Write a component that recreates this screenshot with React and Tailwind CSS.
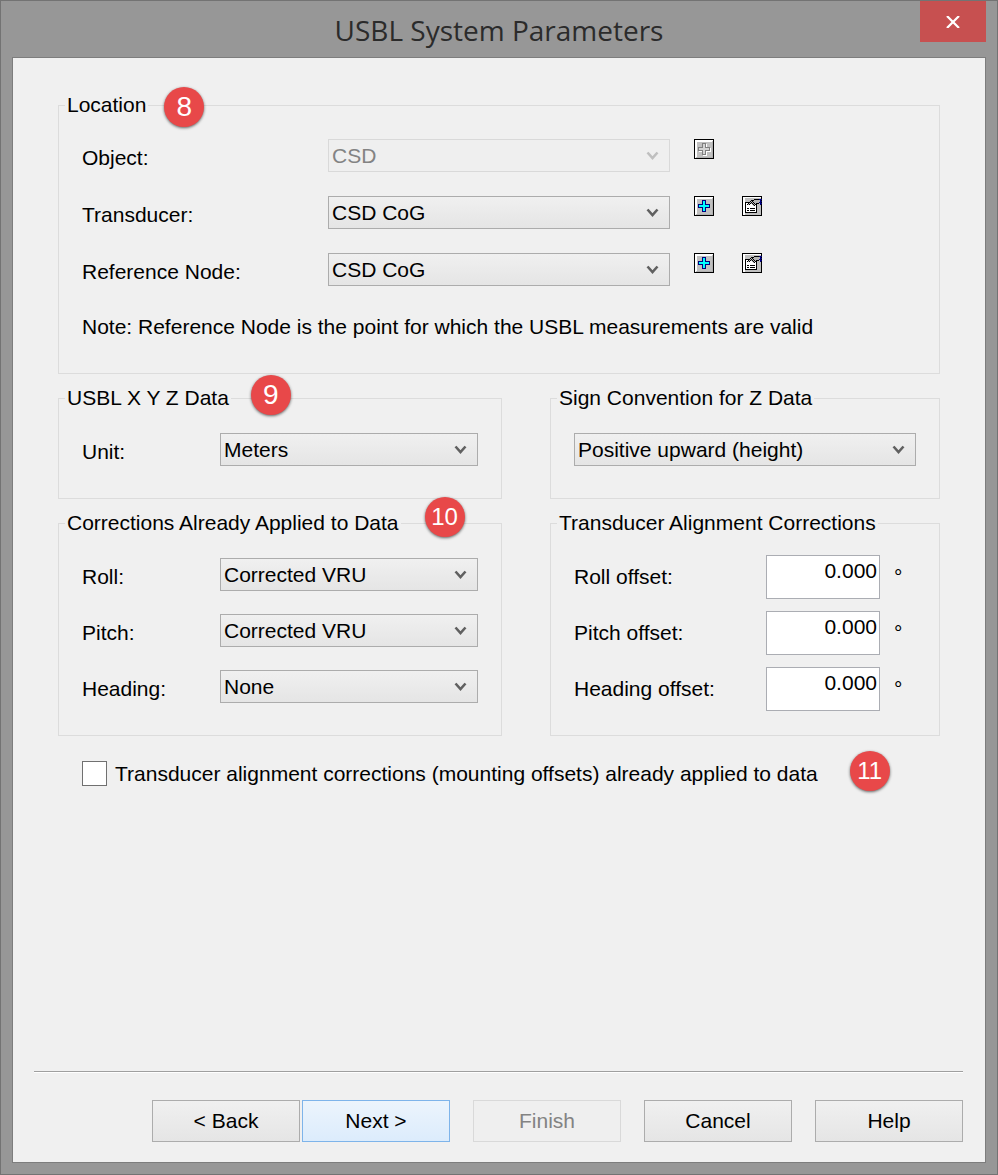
import React, { useState } from 'react';

const GREY_BUTTON = 'border-[#acacac] bg-linear-to-b from-[#f0f0f0] to-[#e5e5e5] text-black';
const BLUE_BUTTON = 'border-[#7eb4ea] bg-linear-to-b from-[#ecf4fc] to-[#dcecfc] text-black';
const DISABLED = 'border-[#d9d9d9] bg-[#efefef] text-[#838383]';

const Badge = ({ children, className = '' }) => (
  <span
    className={`absolute left-full flex h-10 w-10 items-center justify-center rounded-full bg-[#e84849] text-white shadow-[0_1px_3px_rgba(0,0,0,0.6)] ${className}`}
  >
    {children}
  </span>
);

const Group = ({ title, badge, className = '', children }) => (
  <fieldset className={`min-w-0 border border-[#dcdcdc] px-[23px] ${className}`}>
    <legend className="relative -ml-[17px] px-[2px]">
      {title}
      {badge}
    </legend>
    {children}
  </fieldset>
);

const SelectBox = ({ id, label, options, disabled = false, className = '' }) => (
  <div className={`relative ${className}`}>
    <select
      id={id}
      aria-label={label}
      disabled={disabled}
      className={`block h-[33px] w-full appearance-none border pl-[3px] pr-8 opacity-100 ${disabled ? DISABLED : GREY_BUTTON}`}
    >
      {options.map((option) => (
        <option key={option}>{option}</option>
      ))}
    </select>
    <svg
      viewBox="0 0 13 9"
      className={`pointer-events-none absolute right-[11px] top-3 h-[9px] w-[13px] ${disabled ? 'text-[#bfbfbf]' : 'text-[#606060]'}`}
    >
      <path d="M1.500 1.500L6.500 7l5-5.500" fill="none" stroke="currentColor" strokeWidth="2.600" />
    </svg>
  </div>
);

const AddIcon = ({ disabled }) => (
  <svg viewBox="0 0 20 20" className="block h-5 w-5" shapeRendering="crispEdges">
    <path d="M0 0h20v20H0z" fill="#000" />
    <path d="M1 1h18v18H1z" fill="#c0c0c0" />
    <path d="M1 1h18v1H3v1h-1v16H1z" fill="#fff" />
    <path d="M2 2h16v1H3v15H2z" fill="#fff" />
    <path d="M18 3h1v16H3v-1h15z" fill="#b0b0b0" />
    {disabled && <path d="M9 5h4v4h4v4h-4v4H9v-4H5V9h4z" fill="#fff" />}
    <path d="M8 4h4v4h4v4h-4v4H8v-4H4V8h4z" fill={disabled ? '#808080' : '#000080'} />
    <path d="M9 5h2v4h4v2h-4v4H9v-4H5V9h4z" fill={disabled ? '#d4d4d4' : '#00ffff'} />
  </svg>
);

const PropertiesIcon = () => (
  <svg viewBox="0 0 20 20" className="block h-5 w-5" shapeRendering="crispEdges">
    <path d="M0 0h20v20H0z" fill="#000" />
    <path d="M1 1h18v18H1z" fill="#c0c0c0" />
    <path d="M1 1h18v1H3v17H1z" fill="#fff" />
    <path d="M3 6h12v11H3z" fill="#000" />
    <path d="M4 7h10v9H4z" fill="#fff" />
    <path d="M5 12h2v1H5zM8 12h5v1H8zM5 14h2v1H5zM8 14h5v1H8z" fill="#000" />
    <path d="M7 5h2V4h3V3h6v4h-4v2h-2v1h-1V9h-1V8H8v1H6V7h1z" fill="#b4b4b4" />
    <path
      d="M12 3h5v1h-5zM9 4h3v1H9zM8 5h1v1H8zM10 5h1v1h-1zM7 6h1v1H7zM9 6h1v1H9zM11 6h1v1h-1zM6 7h1v1H6zM8 7h1v1H8zM10 7h1v1h-1zM12 7h1v1h-1zM5 8h1v1H5zM7 8h1v1H7zM11 8h1v1h-1zM13 8h1v1h-1zM12 9h1v1h-1zM14 7h3v1h-3z"
      fill="#000"
    />
    <path d="M17 3h3v1h-1v1h1v1h-1v1h1v1h-1v1h-1V7h-1V6h1V4h-1z" fill="#000080" />
  </svg>
);

const LocationRow = ({ id, label, value, disabled, properties }) => (
  <div className="flex items-start">
    <label htmlFor={id} className="w-[246px] shrink-0 pt-[7px]">
      {label}
    </label>
    <SelectBox id={id} options={[value]} disabled={disabled} className="w-[342px]" />
    <div className="ml-6 flex gap-7">
      <button type="button" aria-label="Add" disabled={disabled}>
        <AddIcon disabled={disabled} />
      </button>
      {properties && (
        <button type="button" aria-label="Properties">
          <PropertiesIcon />
        </button>
      )}
    </div>
  </div>
);

const SelectRow = ({ id, label, options }) => (
  <div className="flex items-start">
    <label htmlFor={id} className="w-[138px] shrink-0 pt-[7px]">
      {label}
    </label>
    <SelectBox id={id} options={options} className="flex-1" />
  </div>
);

const OffsetRow = ({ id, label }) => {
  const [value, setValue] = useState('0.000');

  return (
    <div className="flex items-start">
      <label htmlFor={id} className="w-48 shrink-0 pt-[10px]">
        {label}
      </label>
      <input
        id={id}
        type="text"
        value={value}
        onChange={(e) => setValue(e.target.value)}
        className="h-11 w-[114px] border border-[#abadb3] bg-white pb-3 pr-[2px] text-right"
      />
      <span className="ml-[14px] pt-[10px]">°</span>
    </div>
  );
};

const WizardButton = ({ children, variant = GREY_BUTTON, disabled = false }) => (
  <button type="button" disabled={disabled} className={`h-[42px] w-[148px] border ${variant}`}>
    {children}
  </button>
);

const App = () => {
  const [applied, setApplied] = useState(false);

  return (
    <div className="flex min-h-screen flex-col border border-[#737373] bg-[#979797] font-['Liberation_Sans',Arial,sans-serif] text-[21px] leading-6 text-black">
      <header className="grid h-14 grid-cols-[1fr_auto_1fr] px-[11px]">
        <h1 className="col-start-2 self-center pt-[2px] font-['Open_Sans',sans-serif] text-[28px] leading-8 text-[#2b2b2b]">
          USBL System Parameters
        </h1>
        <button
          type="button"
          aria-label="Close"
          className="flex h-[41px] w-[66px] items-center justify-center self-start justify-self-end bg-[#c75050]"
        >
          <svg viewBox="0 0 14 12" className="h-3 w-[14px]" fill="none" stroke="#fff" strokeWidth="2.200">
            <path d="M1 0l12 12M13 0L1 12" />
          </svg>
        </button>
      </header>

      <main className="mx-[11px] mb-[11px] flex flex-1 flex-col border border-[#7d7d7d] bg-[#f0f0f0] pb-5 pt-[35px]">
        <div className="flex flex-col gap-3 px-[45px]">
          <Group
            title="Location"
            badge={<Badge className="-top-1.5 ml-4 text-[28px]">8</Badge>}
            className="pb-[34px] pt-[22px]"
          >
            <div className="flex flex-col gap-6">
              <LocationRow id="object" label="Object:" value="CSD" disabled />
              <LocationRow id="transducer" label="Transducer:" value="CSD CoG" properties />
              <LocationRow id="node" label="Reference Node:" value="CSD CoG" properties />
            </div>
            <p className="mt-[29px]">
              Note: Reference Node is the point for which the USBL measurements are valid
            </p>
          </Group>

          <div className="grid grid-cols-[444fr_390fr] gap-x-12 gap-y-3">
            <Group
              title="USBL X Y Z Data"
              badge={<Badge className="-top-[11px] ml-5 text-[28px]">9</Badge>}
              className="pb-8 pt-[23px]"
            >
              <SelectRow id="unit" label="Unit:" options={['Meters']} />
            </Group>
            <Group title="Sign Convention for Z Data" className="pb-8 pt-[23px]">
              <SelectBox label="Sign Convention for Z Data" options={['Positive upward (height)']} />
            </Group>

            <Group
              title="Corrections Already Applied to Data"
              badge={<Badge className="-top-3.5 ml-6 text-2xl">10</Badge>}
              className="pb-8 pt-[23px]"
            >
              <div className="flex flex-col gap-[23px]">
                <SelectRow id="roll" label="Roll:" options={['Corrected VRU', 'None']} />
                <SelectRow id="pitch" label="Pitch:" options={['Corrected VRU', 'None']} />
                <SelectRow id="heading" label="Heading:" options={['None', 'Corrected VRU']} />
              </div>
            </Group>
            <Group title="Transducer Alignment Corrections" className="pt-5">
              <div className="flex flex-col gap-3">
                <OffsetRow id="roll-offset" label="Roll offset:" />
                <OffsetRow id="pitch-offset" label="Pitch offset:" />
                <OffsetRow id="heading-offset" label="Heading offset:" />
              </div>
            </Group>
          </div>
        </div>

        <div className="ml-[69px] mt-[25px] flex">
          <div className="relative flex items-center gap-2">
            <input
              id="applied"
              type="checkbox"
              checked={applied}
              onChange={(e) => setApplied(e.target.checked)}
              className="h-[25px] w-[25px] shrink-0 appearance-none border border-[#707070] bg-white checked:bg-[#404040]"
            />
            <label htmlFor="applied">
              Transducer alignment corrections (mounting offsets) already applied to data
            </label>
            <Badge className="-top-2.5 ml-8 text-2xl">11</Badge>
          </div>
        </div>

        <footer className="ml-[21px] mr-[22px] mt-auto border-t border-[#9f9f9f]">
          <div className="flex justify-end gap-[23px] border-t border-white pt-[27px]">
            <div className="flex gap-[2px]">
              <WizardButton>&lt; Back</WizardButton>
              <WizardButton variant={BLUE_BUTTON}>Next &gt;</WizardButton>
            </div>
            <WizardButton variant={DISABLED} disabled>
              Finish
            </WizardButton>
            <WizardButton>Cancel</WizardButton>
            <WizardButton>Help</WizardButton>
          </div>
        </footer>
      </main>
    </div>
  );
};

export default App;
